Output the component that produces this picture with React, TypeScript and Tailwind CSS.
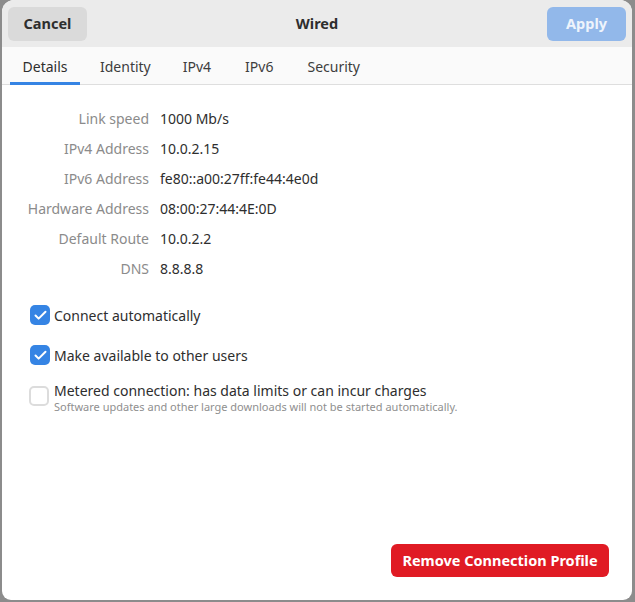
import { Check } from 'lucide-react'

const rows = [
  ['Link speed', '1000 Mb/s'],
  ['IPv4 Address', '10.0.2.15'],
  ['IPv6 Address', 'fe80::a00:27ff:fe44:4e0d'],
  ['Hardware Address', '08:00:27:44:4E:0D'],
  ['Default Route', '10.0.2.2'],
  ['DNS', '8.8.8.8'],
]

function CheckBox({ checked }: { checked: boolean }) {
  return checked ? (
    <div className="w-[20px] h-[20px] rounded-[5px] bg-[#3584e4] flex items-center justify-center shrink-0">
      <Check className="w-[15px] h-[15px] text-white" strokeWidth={3.2} />
    </div>
  ) : (
    <div className="w-[20px] h-[20px] rounded-[5px] border-2 border-[#dcdcdc] bg-white shrink-0" />
  )
}

export default function App() {
  return (
    <div
      className="w-[635px] h-[602px] bg-[#8c8c8c] pl-[2px] pr-[3px] pb-[2px]"
      style={{ fontFamily: '"Noto Sans", "Open Sans", sans-serif' }}
    >
      <div className="w-full h-full bg-white rounded-t-[12px] rounded-b-[9px] overflow-hidden flex flex-col">
        <div className="h-[47px] bg-[#ebebeb] flex items-center justify-between px-[6px] shrink-0">
          <button className="w-[79px] h-[34px] pt-[1px] rounded-[6px] bg-[#dadada] text-[14.5px] font-bold text-[#2e2e2e]">
            Cancel
          </button>
          <div className="pt-[1px] text-[14.5px] font-bold text-[#2e2e2e]">Wired</div>
          <button className="w-[79px] h-[34px] pt-[1px] rounded-[6px] bg-[#92b8ea] text-[14.5px] font-bold text-[#eef4fc]">
            Apply
          </button>
        </div>
        <div className="h-[38px] bg-[#fafafa] border-b border-[#dedede] flex items-stretch pl-[8px] shrink-0 text-[14px]">
          <div className="relative w-[70px] flex items-center justify-center pt-[1px] text-[#2e2e2e]">
            Details
            <div className="absolute left-0 right-0 bottom-[-1px] h-[3px] bg-[#3584e4]" />
          </div>
          <div className="ml-[20px] flex items-center pt-[1px] text-[#3d3d3d]">Identity</div>
          <div className="ml-[32px] flex items-center pt-[1px] text-[#3d3d3d]">IPv4</div>
          <div className="ml-[34px] flex items-center pt-[1px] text-[#3d3d3d]">IPv6</div>
          <div className="ml-[34px] flex items-center pt-[1px] text-[#3d3d3d]">Security</div>
        </div>
        <div className="flex-1 flex flex-col pt-[18px] px-[24px] pb-[23px]">
          <div className="grid grid-cols-[123px_1fr] gap-x-[11px] text-[14px]">
            {rows.map(([k, v]) => (
              <div key={k} className="contents">
                <div className="h-[30px] flex items-center justify-end whitespace-nowrap text-[#8b8b8b]">{k}</div>
                <div className="h-[30px] flex items-center text-[#2e2e2e]">{v}</div>
              </div>
            ))}
          </div>
          <div className="mt-[22px] flex flex-col pl-[4px] text-[14px]">
            <div className="h-[20px] flex items-center gap-[4px]">
              <CheckBox checked />
              <span className="text-[#2e2e2e]">Connect automatically</span>
            </div>
            <div className="mt-[20px] h-[20px] flex items-center gap-[4px]">
              <CheckBox checked />
              <span className="text-[#2e2e2e]">Make available to other users</span>
            </div>
            <div className="mt-[17px] flex items-start gap-[5px] -ml-[1px]">
              <div className="pt-[4px]">
                <CheckBox checked={false} />
              </div>
              <div className="flex flex-col">
                <span className="leading-[18px] text-[#2e2e2e]">
                  Metered connection: has data limits or can incur charges
                </span>
                <span className="text-[11px] leading-[14px] text-[#8f8f8f]">
                  Software updates and other large downloads will not be started automatically.
                </span>
              </div>
            </div>
          </div>
          <div className="mt-auto flex justify-end">
            <button className="w-[218px] h-[33px] pt-[1px] rounded-[6px] bg-[#e01b24] text-[14.5px] font-bold text-white -mr-[1px]">
              Remove Connection Profile
            </button>
          </div>
        </div>
      </div>
    </div>
  )
}
